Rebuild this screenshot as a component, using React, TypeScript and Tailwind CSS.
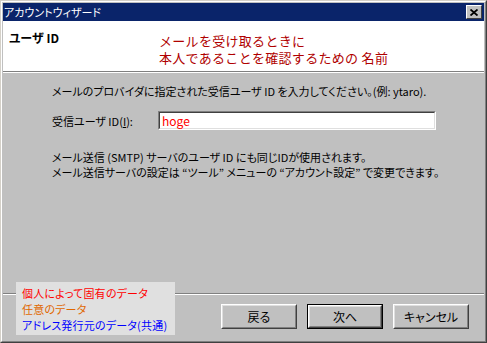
import React from "react";

const font = "font-['Noto_Sans_CJK_JP','Noto_Sans',sans-serif] [font-feature-settings:'palt']";

const WinButton = ({ label, isDefault = false }: { label: string; isDefault?: boolean }) => (
  <div className={`w-[76px] h-[25px] ${isDefault ? "border border-black" : ""}`}>
    <div className="w-full h-full border border-t-white border-l-white border-r-[#404040] border-b-[#404040]">
      <div className="w-full h-full border border-t-[#dfdfdf] border-l-[#dfdfdf] border-r-[#808080] border-b-[#808080] flex items-center justify-center text-[12px] text-black">
        {label}
      </div>
    </div>
  </div>
);

export default function App() {
  return (
    <div className={`w-[487px] h-[343px] bg-[#c0c0c0] border border-t-[#d4d0c8] border-l-[#d4d0c8] border-r-[#404040] border-b-[#404040] ${font}`}>
      <div className="w-full h-full border border-t-white border-l-white border-r-[#808080] border-b-[#808080] p-px flex flex-col relative">
        {/* title bar */}
        <div className="h-[18px] bg-[#0a246a] flex items-center justify-between pl-[1px] pr-[2px]">
          <span className="text-white text-[11px] leading-none">アカウントウィザード</span>
          <div className="w-[16px] h-[14px] bg-[#c0c0c0] border border-t-white border-l-white border-r-[#404040] border-b-[#404040] flex items-center justify-center">
            <svg width="8" height="7" viewBox="0 0 8 7">
              <path d="M0.5 0.5 L7.5 6.5 M7.5 0.5 L0.5 6.5" stroke="black" strokeWidth="1.8" />
            </svg>
          </div>
        </div>

        {/* header */}
        <div className="h-[50px] bg-white flex">
          <div className="w-[156px] pl-[6px] pt-[9px] text-[12px] font-bold text-black leading-[16px]">
            ユーザ ID
          </div>
          <div className="pt-[11px] text-[13px] leading-[17px] text-[#b00000] tracking-[0.3px] [font-feature-settings:normal] whitespace-nowrap">
            <div>メールを受け取るときに</div>
            <div>本人であることを確認するための 名前</div>
          </div>
        </div>
        <div className="h-px bg-[#808080]" />
        <div className="h-px bg-white" />

        {/* body */}
        <div className="flex-1 flex flex-col text-[11px] text-black whitespace-nowrap">
          <div className="pl-[49px] pt-[11px] leading-[14px]">
            メールのプロバイダに指定された受信ユーザ ID を入力してください。(例: ytaro).
          </div>
          <div className="pl-[49px] mt-[13px] flex items-center">
            <span className="w-[106px] leading-[14px]">
              受信ユーザ ID(<span className="underline">I</span>):
            </span>
            <div className="w-[278px] h-[19px] border border-t-[#808080] border-l-[#808080] border-r-white border-b-white">
              <div className="w-full h-full border border-t-[#404040] border-l-[#404040] border-r-[#dfdfdf] border-b-[#dfdfdf] bg-white flex items-center px-[2px] text-[12px] text-[#ff0000] leading-none">
                hoge
              </div>
            </div>
          </div>
          <div className="pl-[49px] mt-[20px] leading-[15px]">
            <div>メール送信 (SMTP) サーバのユーザ ID にも同じIDが使用されます。</div>
            <div>メール送信サーバの設定は “ツール” メニューの “アカウント設定” で変更できます。</div>
          </div>

          <div className="flex-1" />
          <div className="h-px bg-[#808080]" />
          <div className="h-px bg-white" />
          <div className="flex justify-end gap-[10px] pr-[15px] pt-[9px] pb-[11px]">
            <WinButton label="戻る" />
            <WinButton label="次へ" isDefault />
            <WinButton label="キャンセル" />
          </div>
        </div>

        {/* legend overlay */}
        <div className="absolute left-[14px] top-[280px] w-[159px] h-[53px] bg-[#e0e0e0] pl-[6px] pt-[3px] text-[11px] leading-[16px] tracking-[0.2px] whitespace-nowrap">
          <div className="text-[#ff0000]">個人によって固有のデータ</div>
          <div className="text-[#e06800]">任意のデータ</div>
          <div className="text-[#0000ff]">アドレス発行元のデータ(共通)</div>
        </div>
      </div>
    </div>
  );
}
